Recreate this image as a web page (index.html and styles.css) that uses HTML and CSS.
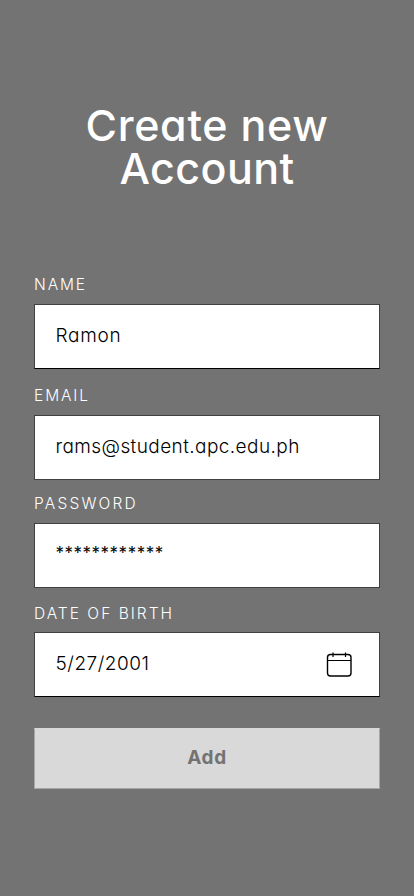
FILE: index.html
```html
<!DOCTYPE html>
<html lang="en">
<head>
<meta charset="utf-8">
<title>Create new Account</title>
<link rel="stylesheet" href="styles.css">
</head>
<body>
<main class="screen">
  <h1 class="title"><span class="title-first">Create new</span><span class="title-second">Account</span></h1>
  <form class="form">
    <div class="field">
      <div class="label"><span class="label-name">NAME</span></div>
      <div class="box box-strong"><span class="value-name">Ramon</span></div>
    </div>
    <div class="field">
      <div class="label"><span class="label-email">EMAIL</span></div>
      <div class="box"><span class="value-email">rams@student.apc.edu.ph</span></div>
    </div>
    <div class="field field-password">
      <div class="label"><span class="label-password">PASSWORD</span></div>
      <div class="box"><span class="value-password">************</span></div>
    </div>
    <div class="field field-date">
      <div class="label"><span class="label-date">DATE OF BIRTH</span></div>
      <div class="box box-strong">
        <span class="value-date">5/27/2001</span>
        <svg class="calendar" width="26" height="26" viewBox="0 0 26 26" fill="none" stroke="#000">
          <rect x="1.5" y="2.5" width="23.5" height="21.5" rx="3" stroke-width="1.4"/>
          <path d="M1.5 8.5H25M7 .4v4.6M19.5 .4v4.6" stroke-width="1.2"/>
        </svg>
      </div>
    </div>
    <button class="add" type="button">Add</button>
  </form>
</main>
</body>
</html>
```

FILE: styles.css
```css
* {
  box-sizing: border-box;
}

body {
  margin: 0;
  background: #737373;
  color: #fff;
  font-family: Inter, "Liberation Sans", sans-serif;
  font-feature-settings: "cv11";
}

.screen {
  width: 414px;
  height: 896px;
  padding: 104px 34px 0;
  overflow: hidden;
}

.title {
  margin: 0;
  height: 170px;
  font-size: 43px;
  font-weight: 500;
  line-height: 43px;
  text-align: center;
  white-space: nowrap;
}

.title span {
  display: block;
}

.title-first {
  letter-spacing: 0.7px;
}

.title-second {
  letter-spacing: 0.4px;
}

.form {
  display: flex;
  flex-direction: column;
}

.field {
  height: 111px;
}

.field-password {
  margin-top: -3px;
}

.field-date {
  margin-top: -2px;
}

.label {
  height: 30px;
  line-height: 21px;
  font-size: 15.5px;
  font-weight: 300;
  letter-spacing: 1.9px;
  white-space: nowrap;
}

.label-password {
  letter-spacing: 2.2px;
}

.field-date .label {
  line-height: 23px;
}

.label-date {
  letter-spacing: 2.02px;
}

.box {
  display: flex;
  align-items: center;
  justify-content: space-between;
  width: 346px;
  height: 65px;
  padding: 0 27px 2px 20.5px;
  border: 1px solid #404040;
  background: #fff;
  color: #000;
  font-size: 19px;
  font-weight: 300;
  white-space: nowrap;
}

.box-strong {
  border-bottom-color: #000;
}

.value-name {
  letter-spacing: 0.7px;
}

.value-email {
  letter-spacing: 0.42px;
}

.value-date {
  letter-spacing: 0.5px;
}

.value-password {
  margin-bottom: 3px;
  font-size: 17px;
  font-weight: 400;
  letter-spacing: 0.5px;
}

.calendar {
  margin-top: 2px;
}

.add {
  width: 346px;
  height: 61px;
  margin-top: 15px;
  padding: 0 0 2px;
  border: 1px solid #a6a6a6;
  border-top-color: #d9d9d9;
  background: #d9d9d9;
  color: #737373;
  font: 700 19px Inter, sans-serif;
  letter-spacing: 0.6px;
}
```
